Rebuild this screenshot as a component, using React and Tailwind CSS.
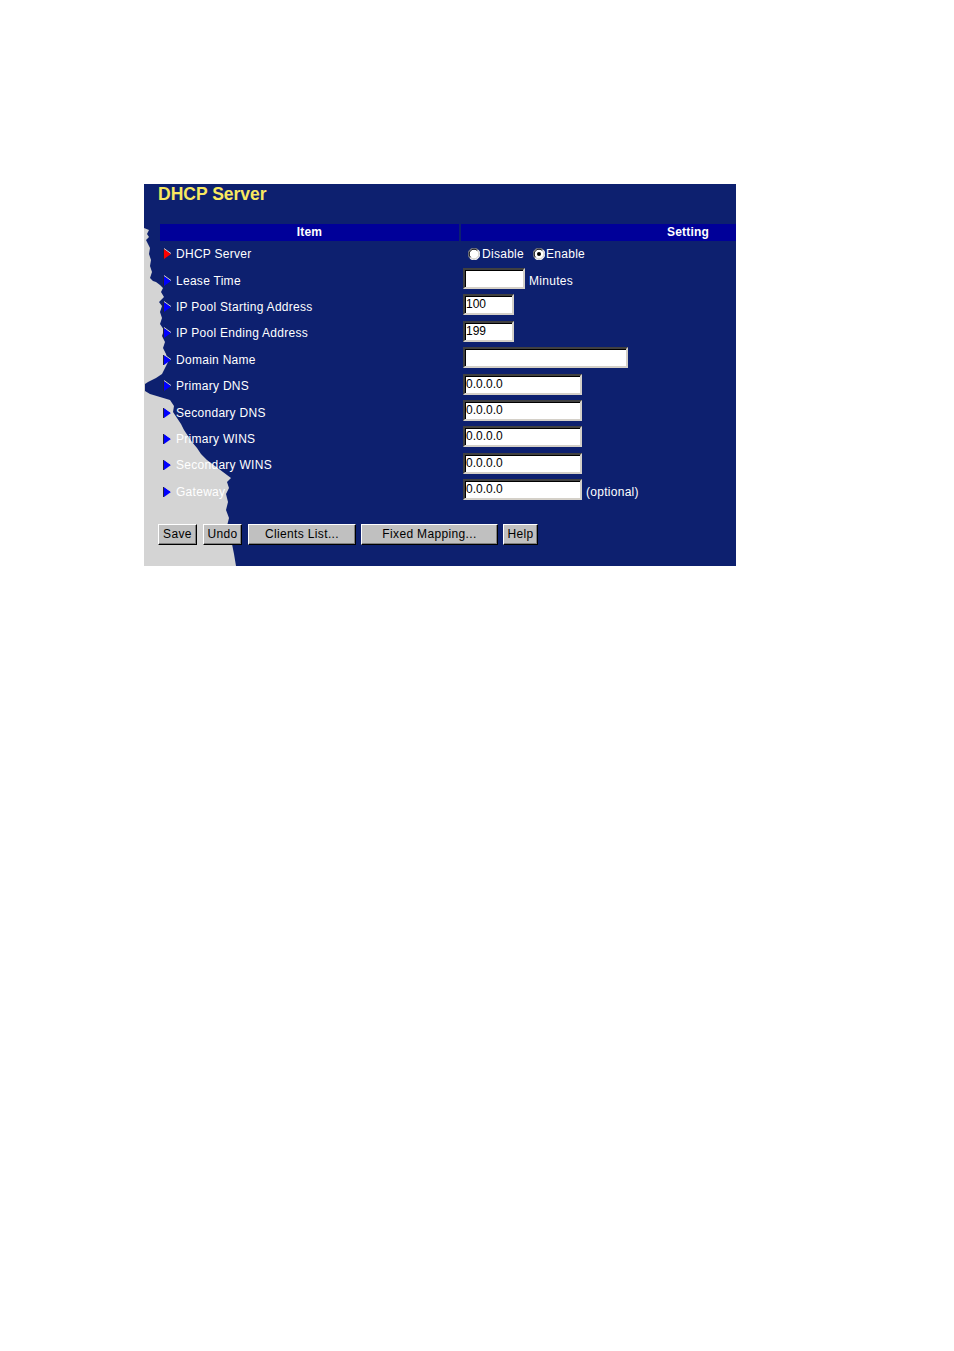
import React from "react";

const font = { fontFamily: '"Liberation Sans", Arial, sans-serif' };

function Arrow({ red }) {
  return (
    <svg width="9" height="12" viewBox="0 0 9 12" className="shrink-0">
      <polygon points="1,1 8,6 1,11" fill={red ? "#ff0000" : "#0000ff"} />
      <line x1="1" y1="0.5" x2="8" y2="5.5" stroke="#d0d0d0" strokeWidth="1" />
      <line x1="0.5" y1="1" x2="0.5" y2="11" stroke="#202040" strokeWidth="1" />
    </svg>
  );
}

function Radio({ checked }) {
  return (
    <svg width="12" height="12" viewBox="0 0 12 12" className="shrink-0">
      <circle cx="6" cy="6" r="5.5" fill="#ffffff" />
      <path d="M1.8 10.2 A5.5 5.5 0 0 1 10.2 1.8" fill="none" stroke="#808080" strokeWidth="1" />
      <path d="M2.6 9.4 A4.5 4.5 0 0 1 9.4 2.6" fill="none" stroke="#000000" strokeWidth="1" />
      <path d="M10.2 1.8 A5.5 5.5 0 0 1 1.8 10.2" fill="none" stroke="#ffffff" strokeWidth="1" />
      <path d="M9.4 2.6 A4.5 4.5 0 0 1 2.6 9.4" fill="none" stroke="#d4d0c8" strokeWidth="1" />
      {checked && <circle cx="6" cy="6" r="2" fill="#000000" />}
    </svg>
  );
}

function Field({ w, value }) {
  return (
    <div
      className={`${w} h-[21px] mb-[4px] bg-white border-2 border-t-[#404040] border-l-[#404040] border-b-[#d4d0c8] border-r-[#d4d0c8] shadow-[inset_1px_1px_0_#000000] pl-[1px] text-[12px] leading-[17px] text-black tracking-normal`}
    >
      {value}
    </div>
  );
}

function Btn({ w, children }) {
  return (
    <div
      className={`${w} h-[21px] flex items-center justify-center bg-[#c0c0c0] border border-t-white border-l-white border-b-black border-r-black shadow-[inset_-1px_-1px_0_#808080] text-[12px] tracking-[0.35px] text-black`}
    >
      {children}
    </div>
  );
}

const rows = [
  { label: "DHCP Server", red: true, setting: "radio" },
  { label: "Lease Time", setting: <><Field w="w-[62px]" value="" /><span className="ml-[4px]">Minutes</span></> },
  { label: "IP Pool Starting Address", setting: <Field w="w-[51px]" value="100" /> },
  { label: "IP Pool Ending Address", setting: <Field w="w-[51px]" value="199" /> },
  { label: "Domain Name", setting: <Field w="w-[165px]" value="" /> },
  { label: "Primary DNS", setting: <Field w="w-[119px]" value="0.0.0.0" /> },
  { label: "Secondary DNS", setting: <Field w="w-[119px]" value="0.0.0.0" /> },
  { label: "Primary WINS", setting: <Field w="w-[119px]" value="0.0.0.0" /> },
  { label: "Secondary WINS", setting: <Field w="w-[119px]" value="0.0.0.0" /> },
  { label: "Gateway", setting: <><Field w="w-[119px]" value="0.0.0.0" /><span className="ml-[4px]">(optional)</span></> },
];

export default function App() {
  return (
    <div className="min-h-[1351px] bg-white pt-[184px] pl-[144px]" style={font}>
      <div className="relative w-[592px] h-[382px] bg-[#0d206f] overflow-hidden">
        <svg
          className="absolute inset-0"
          width="592"
          height="382"
          viewBox="0 0 592 382"
        >
          <path
            fill="#d4d4d4"
            d="M0,44 L5,46 L3,50 L5,53 L2,56 L4,60 L6,64 L5,70 L7,76 L6,82 L8,88 L6,94 L9,97 L12,98 L16,101 L19,104 L17,108 L20,113 L15,118 L18,122 L16,128 L18,134 L16,140 L20,146 L18,152 L21,158 L19,164 L22,170 L24,178 L20,186 L18,190 L12,194 L4,198 L1,200 L1,207 L6,210 L16,213 L26,216 L30,222 L29,228 L33,234 L37,240 L40,246 L44,252 L48,258 L53,264 L57,270 L63,276 L71,282 L79,288 L87,294 L83,298 L85,304 L82,310 L84,318 L82,326 L85,334 L83,342 L86,350 L88,360 L90,370 L92,382 L0,382 Z"
          />
        </svg>
        <div className="relative">
          <div className="h-[40px] pl-[14px] text-[17.5px] leading-[20px] font-bold text-[#f8e860]">
            DHCP Server
          </div>
          <div className="flex ml-[16px] h-[17px] text-[12px] leading-[17px] font-bold tracking-[0.2px] text-white">
            <div className="w-[299px] bg-[#000099] text-center">Item</div>
            <div className="flex-1 ml-[2px] bg-[#000099] text-right pr-[27px]">Setting</div>
          </div>
          {rows.map((r) => (
            <div key={r.label} className="flex items-center h-[26.4px] ml-[16px] text-[12px] tracking-[0.28px] text-white">
              <div className="w-[303px] flex items-center pl-[3px] gap-[4px]">
                <Arrow red={r.red} />
                <span>{r.label}</span>
              </div>
              <div className="flex items-center">
                {r.setting === "radio" ? (
                  <div className="flex items-center pl-[5px]">
                    <Radio />
                    <span className="ml-[2px]">Disable</span>
                    <span className="ml-[9px]"><Radio checked /></span>
                    <span className="ml-[1px]">Enable</span>
                  </div>
                ) : (
                  r.setting
                )}
              </div>
            </div>
          ))}
          <div className="flex mt-[19px] ml-[14px]">
            <Btn w="w-[39px]">Save</Btn>
            <div className="ml-[6px]"><Btn w="w-[39px]">Undo</Btn></div>
            <div className="ml-[6px]"><Btn w="w-[108px]">Clients List...</Btn></div>
            <div className="ml-[5px]"><Btn w="w-[137px]">Fixed Mapping...</Btn></div>
            <div className="ml-[5px]"><Btn w="w-[35px]">Help</Btn></div>
          </div>
        </div>
      </div>
    </div>
  );
}
